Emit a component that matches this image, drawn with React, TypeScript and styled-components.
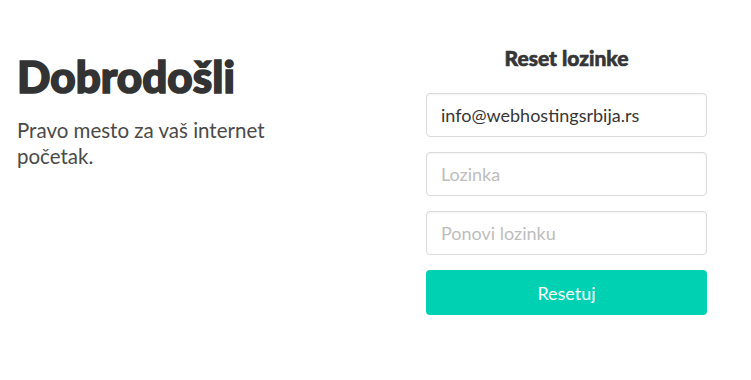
import React from 'react';
import styled, { createGlobalStyle } from 'styled-components';

const GlobalStyle = createGlobalStyle`
  html, body {
    margin: 0;
    padding: 0;
    background: #fff;
  }
  body {
    font-family: Lato, "Liberation Sans", sans-serif;
    color: #363636;
  }
`;

const Page = styled.div`
  display: flex;
  justify-content: space-between;
  padding: 44px 44px 0 17px;
`;

const Intro = styled.div`
  width: 280px;
  padding-top: 6px;
`;

const Heading = styled.h1`
  margin: 0;
  font-size: 44px;
  font-weight: 900;
  line-height: 1.2;
  color: #333;
  -webkit-text-stroke: 1.6px #333;
`;

const Lead = styled.p`
  margin: 14px 0 0;
  font-size: 20.5px;
  line-height: 26px;
  color: #4a4a4a;
`;

const Form = styled.form`
  width: 281px;
  display: flex;
  flex-direction: column;
  gap: 15px;
`;

const FormTitle = styled.h2`
  margin: 0 0 6px;
  text-align: center;
  font-size: 21px;
  font-weight: 900;
  line-height: 28px;
  color: #363636;
  -webkit-text-stroke: 0.6px #363636;
`;

const Input = styled.input`
  box-sizing: border-box;
  height: 44px;
  padding: 0 14px;
  border: 1px solid #dbdbdb;
  border-radius: 4px;
  font-family: Lato, "Liberation Sans", sans-serif;
  font-size: 18px;
  color: #363636;
  outline: none;
  box-shadow: inset 0 1px 2px rgba(10, 10, 10, 0.05);

  &::placeholder {
    color: #bdbdbd;
  }
`;

const Button = styled.button`
  height: 45px;
  border: none;
  border-radius: 4px;
  background: #00d1b2;
  color: #fff;
  font-family: Lato, "Liberation Sans", sans-serif;
  font-size: 18px;
  cursor: pointer;
`;

export default function App() {
  return (
    <>
      <GlobalStyle />
      <Page>
        <Intro>
          <Heading>Dobrodošli</Heading>
          <Lead>Pravo mesto za vaš internet početak.</Lead>
        </Intro>
        <Form onSubmit={(e) => e.preventDefault()}>
          <FormTitle>Reset lozinke</FormTitle>
          <Input type="email" defaultValue="info@webhostingsrbija.rs" />
          <Input type="password" placeholder="Lozinka" />
          <Input type="password" placeholder="Ponovi lozinku" />
          <Button type="submit">Resetuj</Button>
        </Form>
      </Page>
    </>
  );
}
